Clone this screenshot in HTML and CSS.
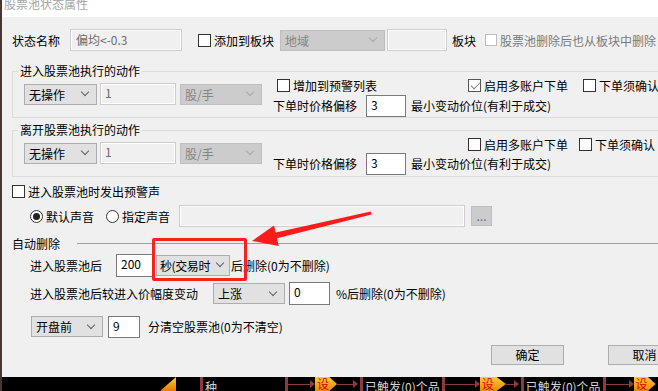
FILE: index.html
```html
<!DOCTYPE html>
<html lang="zh-CN">
<head>
    <meta charset="UTF-8">
    <title>股票池状态属性</title>
    <link rel="stylesheet" href="styles.css">
</head>
<body>
<div class="window">
    <div class="titlebar"><span>股票池状态属性</span></div>

    <div class="dialog">
        <!-- name / block -->
        <div class="row row-name">
            <span>状态名称</span>
            <span class="edit off edit-name">偏均&lt;-0.3</span>
            <span class="chk chk-block"><i class="box"></i>添加到板块</span>
            <span class="combo off combo-region">地域</span>
            <span class="edit off edit-block"></span>
            <span class="lbl-block">板块</span>
            <span class="chk off chk-remove"><i class="box"></i>股票池删除后也从板块中删除</span>
        </div>

        <!-- enter pool -->
        <fieldset class="group enter">
            <legend>进入股票池执行的动作</legend>
            <div class="group-body">
                <div class="ctrls">
                    <span class="combo combo-action">无操作</span>
                    <span class="edit off edit-qty">1</span>
                    <span class="combo off combo-unit">股/手</span>
                </div>
                <div class="opts">
                    <div class="opt-a">
                        <span class="cell-warn"><span class="chk"><i class="box"></i>增加到预警列表</span></span>
                        <span class="cell-multi"><span class="chk"><i class="box on"></i>启用多账户下单</span></span>
                        <span class="chk"><i class="box"></i>下单须确认</span>
                    </div>
                    <div class="opt-b">
                        <span>下单时价格偏移</span>
                        <span class="edit edit-offset">3</span>
                        <span class="hint">最小变动价位(有利于成交)</span>
                    </div>
                </div>
            </div>
        </fieldset>

        <!-- leave pool -->
        <fieldset class="group leave">
            <legend>离开股票池执行的动作</legend>
            <div class="group-body">
                <div class="ctrls">
                    <span class="combo combo-action">无操作</span>
                    <span class="edit off edit-qty">1</span>
                    <span class="combo off combo-unit">股/手</span>
                </div>
                <div class="opts">
                    <div class="opt-a">
                        <span class="cell-warn"></span>
                        <span class="cell-multi"><span class="chk"><i class="box"></i>启用多账户下单</span></span>
                        <span class="chk"><i class="box"></i>下单须确认</span>
                    </div>
                    <div class="opt-b">
                        <span>下单时价格偏移</span>
                        <span class="edit edit-offset">3</span>
                        <span class="hint">最小变动价位(有利于成交)</span>
                    </div>
                </div>
            </div>
        </fieldset>

        <!-- sound -->
        <div class="row row-sound">
            <span class="chk"><i class="box"></i>进入股票池时发出预警声</span>
        </div>
        <div class="row row-radio">
            <span class="chk"><i class="radio on"></i>默认声音</span>
            <span class="chk radio-custom"><i class="radio"></i>指定声音</span>
            <span class="edit off edit-sound"></span>
            <span class="btn-dots">...</span>
        </div>

        <!-- auto delete -->
        <div class="row row-section">
            <span>自动删除</span>
            <span class="rule"></span>
        </div>
        <div class="row row-del1">
            <span>进入股票池后</span>
            <span class="edit edit-secs">200</span>
            <span class="combo combo-secs">秒(交易时</span>
            <span class="hint">后删除(0为不删除)</span>
        </div>
        <div class="row row-del2">
            <span>进入股票池后较进入价幅度变动</span>
            <span class="combo combo-dir">上涨</span>
            <span class="edit edit-pct">0</span>
            <span class="hint">%后删除(0为不删除)</span>
        </div>
        <div class="row row-del3">
            <span class="combo combo-open">开盘前</span>
            <span class="edit edit-min">9</span>
            <span class="hint">分清空股票池(0为不清空)</span>
        </div>

        <div class="row row-buttons">
            <span class="btn">确定</span>
            <span class="btn">取消</span>
        </div>
    </div>

    <!-- chart strip behind the dialog -->
    <div class="ticker">
        <i class="tail"></i>
        <i class="bar bar-1"></i><span class="tick-text">种</span>
        <i class="bar bar-2"></i><i class="link link-1"></i><span class="tag">设</span><i class="link link-2"></i>
        <i class="bar bar-3"></i><span class="tick-text">已触发(0)个品</span>
        <i class="bar bar-4"></i><i class="link link-3"></i><span class="tag tag-wide">设</span><i class="link link-4"></i>
        <i class="bar"></i><span class="tick-text">已触发(0)个品</span>
        <i class="bar bar-4"></i><i class="link link-5"></i><span class="tag">设</span>
    </div>
</div>

<!-- annotation -->
<div class="callout"></div>
<svg class="arrow" width="658" height="391" viewBox="0 0 658 391">
    <polygon points="252,241 274,225.5 275.7,232.4 370.8,211.5 371.4,214.5 277.1,238.2 278.7,246" fill="#f81c1c"/>
</svg>
</body>
</html>
```

FILE: styles.css
```css
/* Global */
* {
    box-sizing: border-box;
    margin: 0;
    padding: 0;
}

body {
    position: relative;
    width: 658px;
    height: 391px;
    overflow: hidden;
    font-family: "Noto Sans CJK SC", "Noto Sans", sans-serif;
    font-size: 12px;
    color: #000;
    background: #000;
}

i {
    display: block;
    font-style: normal;
}

.window {
    height: 391px;
    border-left: 2px solid #4b3434;
}

/* Title bar */
.titlebar {
    height: 17px;
    background: #fff;
    color: #a6a6a6;
    padding-left: 2px;
    overflow: hidden;
}
.titlebar span {
    display: block;
    line-height: 12px;
    margin-top: -2px;
}

/* Dialog body */
.dialog {
    height: 360px;
    background: #f0f0f0;
    padding: 12px 0 0 10px;
    overflow: hidden;
    white-space: nowrap;
}

.row {
    display: flex;
    align-items: center;
}

/* Controls */
.edit {
    display: block;
    height: 22px;
    border: 1px solid #7a7a7a;
    background: #fff;
    padding: 1px 0 0 4px;
    line-height: 16px;
}
.edit.off {
    border-color: #cdcdcd;
    background: #f0f0f0;
    box-shadow: inset 0 0 0 1px #fff;
    color: #6d6d6d;
}

.combo {
    display: flex;
    align-items: center;
    justify-content: space-between;
    height: 21px;
    border: 1px solid #adadad;
    background: #e1e1e1;
    padding: 0 8px 0 4px;
}
.combo::after {
    content: "";
    flex: none;
    width: 5px;
    height: 5px;
    border-right: 1px solid #606060;
    border-bottom: 1px solid #606060;
    transform: rotate(45deg);
    margin-top: -4px;
}
.combo.off {
    background: #cccccc;
    border-color: #bfbfbf;
    color: #858585;
}
.combo.off::after {
    border-color: #a9a9a9;
}

.chk {
    display: flex;
    align-items: center;
    gap: 3px;
}
.box {
    width: 13px;
    height: 13px;
    border: 1px solid #333;
    background: #fff;
}
.box.on {
    border-color: #555;
}
.box.on::after {
    content: "";
    display: block;
    width: 4px;
    height: 8px;
    margin: 0 0 0 3.5px;
    border-right: 1.5px solid #808080;
    border-bottom: 1.5px solid #808080;
    transform: rotate(45deg);
}
.chk.off {
    color: #7a7a7a;
}
.chk.off .box {
    border-color: #bcbcbc;
}

.radio {
    width: 13px;
    height: 13px;
    border: 1px solid #333;
    border-radius: 50%;
    background: #fff;
}
.radio.on::after {
    content: "";
    display: block;
    width: 7px;
    height: 7px;
    margin: 2px;
    border-radius: 50%;
    background: #222;
}

.btn {
    display: block;
    width: 73px;
    height: 20px;
    border: 1px solid #adadad;
    background: #e1e1e1;
    text-align: center;
    line-height: 18px;
}

/* Row 1 */
.row-name {
    height: 22px;
}
.edit-name {
    width: 112px;
    margin-left: 10px;
    padding: 0 5px;
    line-height: 20px;
}
.chk-block {
    margin-left: 16px;
}
.combo-region {
    width: 105px;
    margin-left: 6px;
}
.edit-block {
    width: 60px;
    margin-left: 2px;
}
.lbl-block {
    margin-left: 5px;
}
.chk-remove {
    margin-left: 9px;
}
.chk-remove .box {
    width: 12px;
    height: 12px;
}

/* Group boxes */
.group {
    border: 1px solid #dcdcdc;
    margin: 14px -20px 0 0;
    padding: 0 0 0 5px;
    min-width: 0;
}
.group legend {
    padding: 0 2px;
    line-height: 12px;
}
.group.leave {
    margin-top: 6px;
}

.group-body {
    display: flex;
    height: 40px;
}
.ctrls {
    display: flex;
    align-items: center;
    align-self: flex-start;
    margin: 6px 0 0 6px;
}
.combo-action {
    width: 73px;
}
.edit-qty {
    width: 76px;
    margin-left: 3px;
}
.combo-unit {
    width: 82px;
    margin-left: 4px;
}

.opts {
    margin-left: 11px;
}
.opt-a {
    display: flex;
    align-items: center;
    height: 17px;
}
.cell-warn {
    width: 195px;
    padding-left: 4px;
}
.cell-multi {
    width: 115px;
}
.leave .opt-a {
    height: 16px;
}
.leave .cell-multi {
    width: 111px;
}
.opt-b {
    display: flex;
    align-items: center;
    height: 23px;
}
.edit-offset {
    width: 40px;
    margin-left: 9px;
}
.opt-b .hint {
    margin-left: 5px;
}

/* Sound */
.row-sound {
    height: 13px;
    margin-top: 8px;
}
.row-radio {
    height: 22px;
    margin-top: 7px;
    padding-left: 18px;
}
.radio-custom {
    margin-left: 12px;
}
.edit-sound {
    width: 286px;
    margin-left: 9px;
}
.btn-dots {
    display: block;
    width: 21px;
    height: 20px;
    margin-left: 6px;
    border: 1px solid #bfbfbf;
    background: #cccccc;
    color: #6c6c96;
    text-align: center;
    line-height: 18px;
}

/* Auto delete */
.row-section {
    height: 16px;
    margin-top: 8px;
}
.rule {
    flex: 1;
    margin-left: 17px;
    border-top: 1px solid #a0a0a0;
}

.row-del1 {
    height: 24px;
    margin-top: 2px;
    padding-left: 18px;
}
.edit-secs {
    width: 38px;
    height: 23px;
    margin-left: 14px;
}
.combo-secs {
    width: 74px;
    margin-left: 2px;
    padding: 0 6px 0 3px;
    letter-spacing: -0.4px;
}
.row-del1 .hint {
    margin-left: 1px;
}

.row-del2 {
    height: 23px;
    margin-top: 5px;
    padding-left: 18px;
}
.combo-dir {
    width: 72px;
    margin-left: 15px;
}
.edit-pct {
    width: 41px;
    height: 23px;
    margin-left: 4px;
}
.row-del2 .hint {
    margin-left: 6px;
}

.row-del3 {
    height: 23px;
    margin-top: 10px;
    padding-left: 19px;
}
.combo-open {
    width: 72px;
}
.edit-min {
    width: 32px;
    margin-left: 5px;
}
.row-del3 .hint {
    margin-left: 8px;
}

.row-buttons {
    height: 20px;
    margin: 7px -23px 0 0;
    justify-content: flex-end;
    gap: 44px;
}

/* Chart strip */
.ticker {
    display: flex;
    height: 14px;
    background: #000;
    overflow: hidden;
    white-space: nowrap;
}
.tail {
    width: 16px;
    margin-left: 158px;
    background: linear-gradient(#ffcc33, #e87a00);
    clip-path: polygon(0 100%, 100% 0, 100% 100%);
    border-left: 1px solid #f00;
}
.bar {
    width: 3px;
    height: 14px;
    margin-left: 2px;
    background: #8b3b3b;
}
.bar-1 {
    margin-left: 24px;
}
.bar-2 {
    margin-left: 68px;
}
.bar-3 {
    margin-left: 2px;
}
.bar-4 {
    margin-left: 2px;
}
.tick-text {
    margin-left: 2px;
    color: #d4d4d4;
    line-height: 14px;
    margin-top: 3px;
}
.link {
    height: 14px;
    background:
        linear-gradient(#8b3b3b, #8b3b3b) left center / calc(100% - 4px) 1px no-repeat;
    position: relative;
}
.link::after {
    content: "";
    position: absolute;
    right: 0;
    top: 3px;
    border-left: 5px solid #8b3b3b;
    border-top: 4px solid transparent;
    border-bottom: 4px solid transparent;
}
.link-1 { width: 27px; }
.link-2 { width: 21px; }
.link-3 { width: 35px; }
.link-4 { width: 13px; }
.link-5 { width: 28px; }
.tag {
    display: block;
    height: 14px;
    padding: 0 8px 0 2px;
    background: linear-gradient(#ffc83a, #e98a00);
    color: #e00000;
    line-height: 14px;
    clip-path: polygon(0 0, 65% 0, 100% 50%, 65% 100%, 0 100%);
}
.tag-wide {
    padding-right: 12px;
}

/* Annotation overlay */
.callout {
    position: absolute;
    left: 152px;
    top: 238px;
    width: 95px;
    height: 43px;
    border: 3px solid #f52222;
    border-radius: 2px;
}
.arrow {
    position: absolute;
    left: 0;
    top: 0;
}
```
